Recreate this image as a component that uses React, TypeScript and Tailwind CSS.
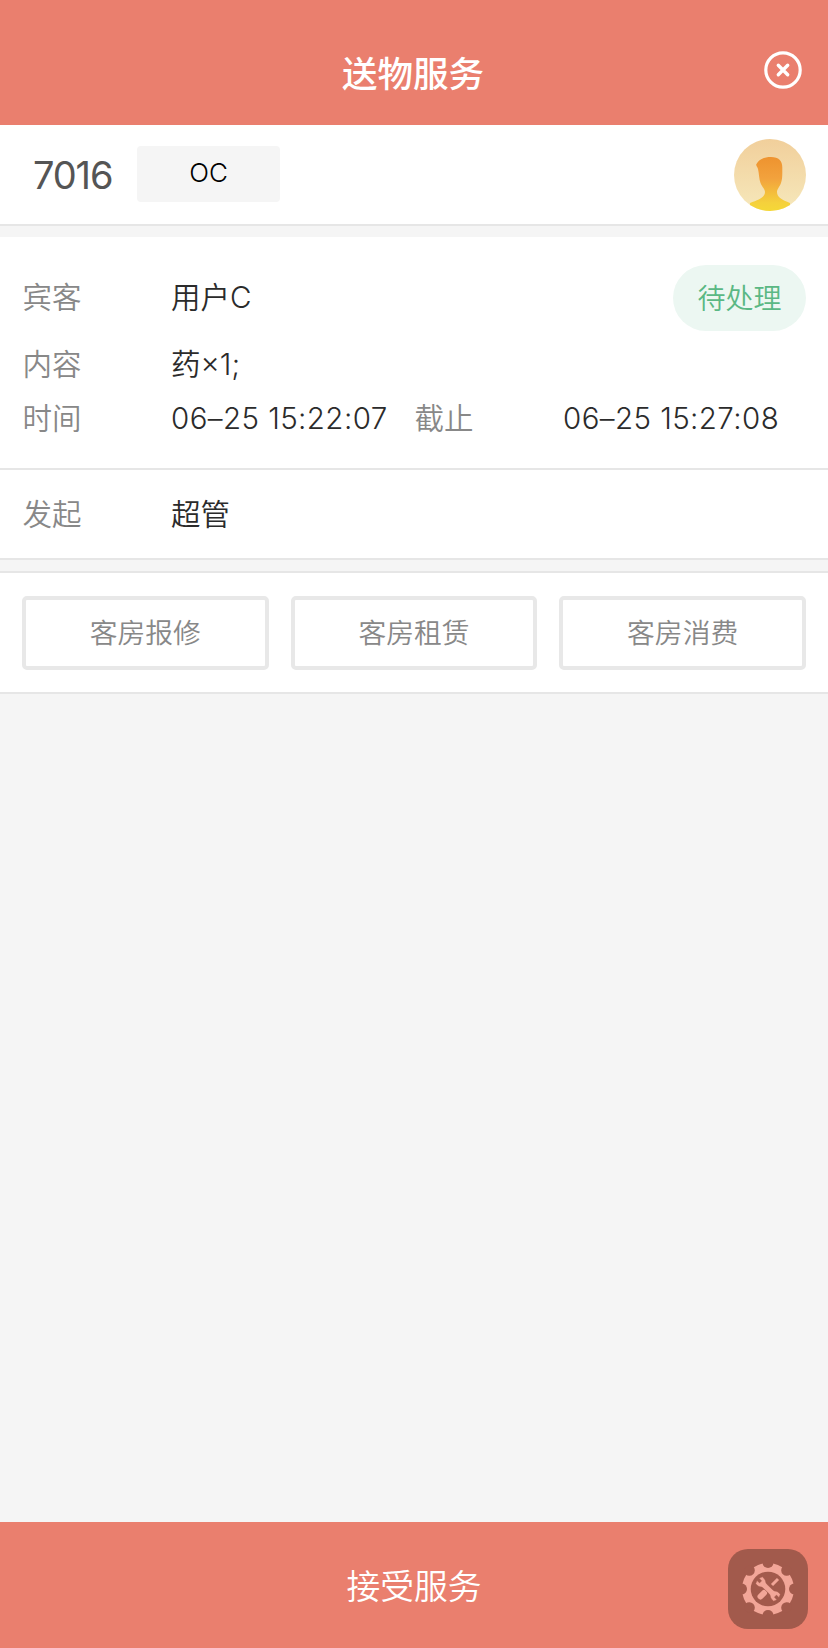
import type { ReactNode } from "react";

const actions = ["客房报修", "客房租赁", "客房消费"];

const notchAngles = [0, 45, 90, 135, 180, 225, 270, 315];

function CloseIcon() {
  return (
    <svg viewBox="0 0 38 38" className="size-[38px]" fill="none" stroke="#fff" strokeLinecap="round">
      <circle cx="19" cy="19" r="17.2" strokeWidth="3.2" />
      <path d="M14.3 14.3l9.4 9.4M23.7 14.3l-9.4 9.4" strokeWidth="3.4" />
    </svg>
  );
}

function Avatar() {
  return (
    <svg viewBox="0 0 72 72" className="size-[72px]">
      <defs>
        <linearGradient id="avatarBg" x1="0" y1="0" x2="0" y2="1">
          <stop offset="0" stopColor="#f1cf9b" />
          <stop offset="1" stopColor="#f6e8bb" />
        </linearGradient>
        <linearGradient id="avatarBody" x1="0" y1="0" x2="0" y2="1">
          <stop offset="0" stopColor="#ee932f" />
          <stop offset="0.4" stopColor="#f2a23d" />
          <stop offset="0.85" stopColor="#f5d13c" />
          <stop offset="1" stopColor="#f5d836" />
        </linearGradient>
        <clipPath id="avatarClip">
          <circle cx="36" cy="36" r="36" />
        </clipPath>
      </defs>
      <circle cx="36" cy="36" r="36" fill="url(#avatarBg)" />
      <path
        clipPath="url(#avatarClip)"
        fill="url(#avatarBody)"
        d="M22.500 25C25 20 30 18 37 18C45 18 48.500 22 48.300 29C48.300 35 48.500 40 47 44C45.500 48 43 50 43 53C43 58 48 61 56 64V72H16V64C25 61 31 58 31 53C31 50 28 48 26.500 44C25 40 25 34 24 30C23.500 28 21.500 26 22.500 25Z"
      />
    </svg>
  );
}

function ToolsIcon() {
  return (
    <svg viewBox="-27 -27 54 54" className="size-[54px]">
      <circle r="26" fill="#f2a698" />
      {notchAngles.map((angle) => (
        <ellipse key={angle} cy="-26" rx="5.400" ry="5" fill="#a25a4c" transform={`rotate(${angle})`} />
      ))}
      <circle r="17.300" fill="#a25a4c" />
      {/* Screwdriver */}
      <path d="M10 -10L4 -4" stroke="#f2a698" strokeWidth="3" />
      <path d="M-4 4L-7.500 7.500" stroke="#f2a698" strokeWidth="6" strokeLinecap="round" />
      {/* Wrench */}
      <g transform="rotate(-46)" fill="#f2a698" stroke="#a25a4c" strokeWidth="0.400">
        <path d="M-4.800 -12.500L-1.500 -13.800V-10.300H1.500V-13.800L4.800 -12.500V-9.500C4.800 -7.500 2.700 -6.500 2.700 -4.500V4.500C2.700 6.500 4.800 7.500 4.800 9.500V12.500L1.500 13.800V10.300H-1.500V13.800L-4.800 12.500V9.500C-4.800 7.500 -2.700 6.500 -2.700 4.500V-4.500C-2.700 -6.500 -4.800 -7.500 -4.800 -9.500Z" />
      </g>
    </svg>
  );
}

function Label({ children }: { children: ReactNode }) {
  return <span className="shrink-0 text-[#888]">{children}</span>;
}

export default function App() {
  return (
    <div className="flex h-[1648px] w-[828px] flex-col bg-[#f5f5f5] font-['Inter','Noto_Sans_CJK_SC',sans-serif] font-[350] text-[#2b2b2b]">
      {/* Title bar */}
      <header className="grid h-[125px] shrink-0 grid-cols-[1fr_auto_1fr] items-center bg-[#ea7f6e] pt-[18px] text-white">
        <h1 className="col-start-2 pr-0.5 pt-1.5 text-[35.500px] font-medium leading-none">送物服务</h1>
        <button className="-mt-1 mr-[26px] justify-self-end" aria-label="关闭">
          <CloseIcon />
        </button>
      </header>

      {/* Room */}
      <section className="flex h-[101px] shrink-0 items-center border-b-2 border-[#e6e6e6] bg-white pl-[33px] pr-[22px]">
        <span className="w-[104px] text-[38px] font-normal leading-none tracking-[-0.03em] text-[#555]">7016</span>
        <span className="-mt-0.5 flex h-14 w-[143px] items-center justify-center rounded bg-[#f5f5f5] pb-0.5 text-[26px] leading-none text-black">
          OC
        </span>
        <span className="ml-auto">
          <Avatar />
        </span>
      </section>

      {/* Order details */}
      <section className="mt-[11px] flex h-[233px] shrink-0 flex-col border-b-2 border-[#e6e6e6] bg-white pl-[22.500px] pr-[22px] pt-7 text-[29.500px] leading-none">
        <div className="flex h-[66px] items-center">
          <div className="w-[148.500px]">
            <Label>宾客</Label>
          </div>
          <span>用户C</span>
          <span className="ml-auto flex h-[66px] w-[133px] items-center justify-center rounded-full bg-[#ecf7f2] pt-0.5 text-[28px] text-[#5ab884]">
            待处理
          </span>
        </div>
        <div className="flex h-[66px] items-center pt-px">
          <div className="w-[148.500px]">
            <Label>内容</Label>
          </div>
          <span>药×1;</span>
        </div>
        <div className="flex h-11 items-center">
          <div className="w-[148.500px]">
            <Label>时间</Label>
          </div>
          <span className="w-[243.500px] whitespace-nowrap tracking-[0.420px]">06–25 15:22:07</span>
          <div className="w-[148.500px]">
            <Label>截止</Label>
          </div>
          <span className="whitespace-nowrap tracking-[0.420px]">06–25 15:27:08</span>
        </div>
      </section>

      <section className="flex h-[90px] shrink-0 items-center border-b-2 border-[#e6e6e6] bg-white pl-[22.500px] pr-[22px] pt-px text-[29.500px] leading-none">
        <div className="w-[148.500px]">
          <Label>发起</Label>
        </div>
        <span>超管</span>
      </section>

      {/* Room actions */}
      <section className="mt-[11px] grid h-[123px] shrink-0 grid-cols-3 items-center gap-[22px] border-y-2 border-[#e6e6e6] bg-white px-[22px]">
        {actions.map((action) => (
          <button
            key={action}
            className="h-[74px] rounded-[5px] border-4 border-[#e8e8e8] pt-0.5 text-[27.800px] leading-none text-[#888]"
          >
            {action}
          </button>
        ))}
      </section>

      {/* Accept bar */}
      <footer className="relative mt-auto flex h-[126px] shrink-0 items-center justify-center bg-[#ea7f6e] text-white">
        <button className="pt-[3px] text-[33.800px] leading-none">接受服务</button>
        <div className="absolute right-5 top-[27px] flex size-20 items-center justify-center rounded-[20px] bg-[#a25a4c]">
          <ToolsIcon />
        </div>
      </footer>
    </div>
  );
}
